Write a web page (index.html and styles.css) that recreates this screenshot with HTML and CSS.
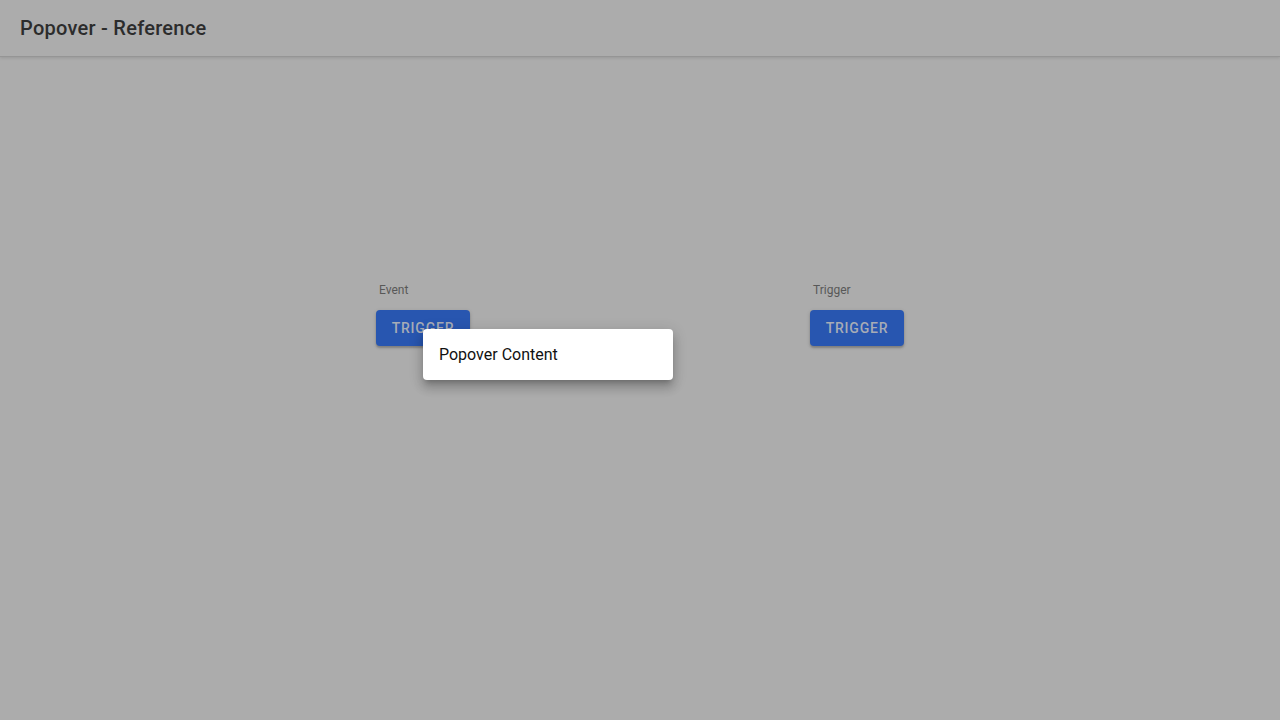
FILE: index.html
```html
<!DOCTYPE html>
<html lang="en">
<head>
<meta charset="utf-8">
<title>Popover - Reference</title>
<link rel="stylesheet" href="styles.css">
</head>
<body>
<header class="appbar">
  <h1 class="title">Popover - Reference</h1>
</header>
<main class="stage">
  <div class="demo">
    <div class="label">Event</div>
    <div class="anchor">
      <button class="btn">Trigger</button>
      <div class="popover">Popover Content</div>
    </div>
  </div>
  <div class="demo">
    <div class="label">Trigger</div>
    <div class="anchor">
      <button class="btn">Trigger</button>
    </div>
  </div>
</main>
</body>
</html>
```
FILE: styles.css
```css
html, body {
  margin: 0;
  padding: 0;
  height: 100%;
}
body {
  background: #acacac;
  font-family: Roboto, "Liberation Sans", sans-serif;
  overflow: hidden;
}
.appbar {
  height: 56px;
  display: flex;
  align-items: center;
  padding: 0 20px;
  background: #acacac;
  box-shadow: 0 1px 0 #959595, 0 2px 3px rgba(0,0,0,0.12);
  position: relative;
  z-index: 1;
}
.title {
  margin: 0;
  font-size: 20px;
  font-weight: 500;
  color: #2c2c2c;
  letter-spacing: 0.26px;
}
.stage {
  display: flex;
  justify-content: center;
  gap: 340px;
  padding-top: 226px;
}
.demo {
  display: flex;
  flex-direction: column;
  align-items: flex-start;
}
.label {
  font-size: 12px;
  line-height: 16px;
  color: #585858;
  padding-left: 3px;
  margin-bottom: 12px;
}
.anchor {
  position: relative;
}
.btn {
  display: block;
  width: 94px;
  height: 36px;
  border: 0;
  border-radius: 4px;
  background: #2856b0;
  color: #a7acb6;
  font-family: Roboto, "Liberation Sans", sans-serif;
  font-size: 14px;
  font-weight: 500;
  letter-spacing: 0.8px;
  text-transform: uppercase;
  padding: 0;
  box-shadow: 0 2px 2px rgba(0,0,0,0.2), 0 1px 4px rgba(0,0,0,0.12);
}
.popover {
  position: absolute;
  left: 47px;
  top: 19px;
  width: 250px;
  height: 51px;
  box-sizing: border-box;
  padding: 0 16px;
  display: flex;
  align-items: center;
  background: #fff;
  border-radius: 4px;
  color: #111;
  font-size: 16px;
  white-space: nowrap;
  box-shadow: 0 5px 5px -3px rgba(0,0,0,0.2), 0 8px 10px 1px rgba(0,0,0,0.14), 0 3px 14px 2px rgba(0,0,0,0.12);
}
```
